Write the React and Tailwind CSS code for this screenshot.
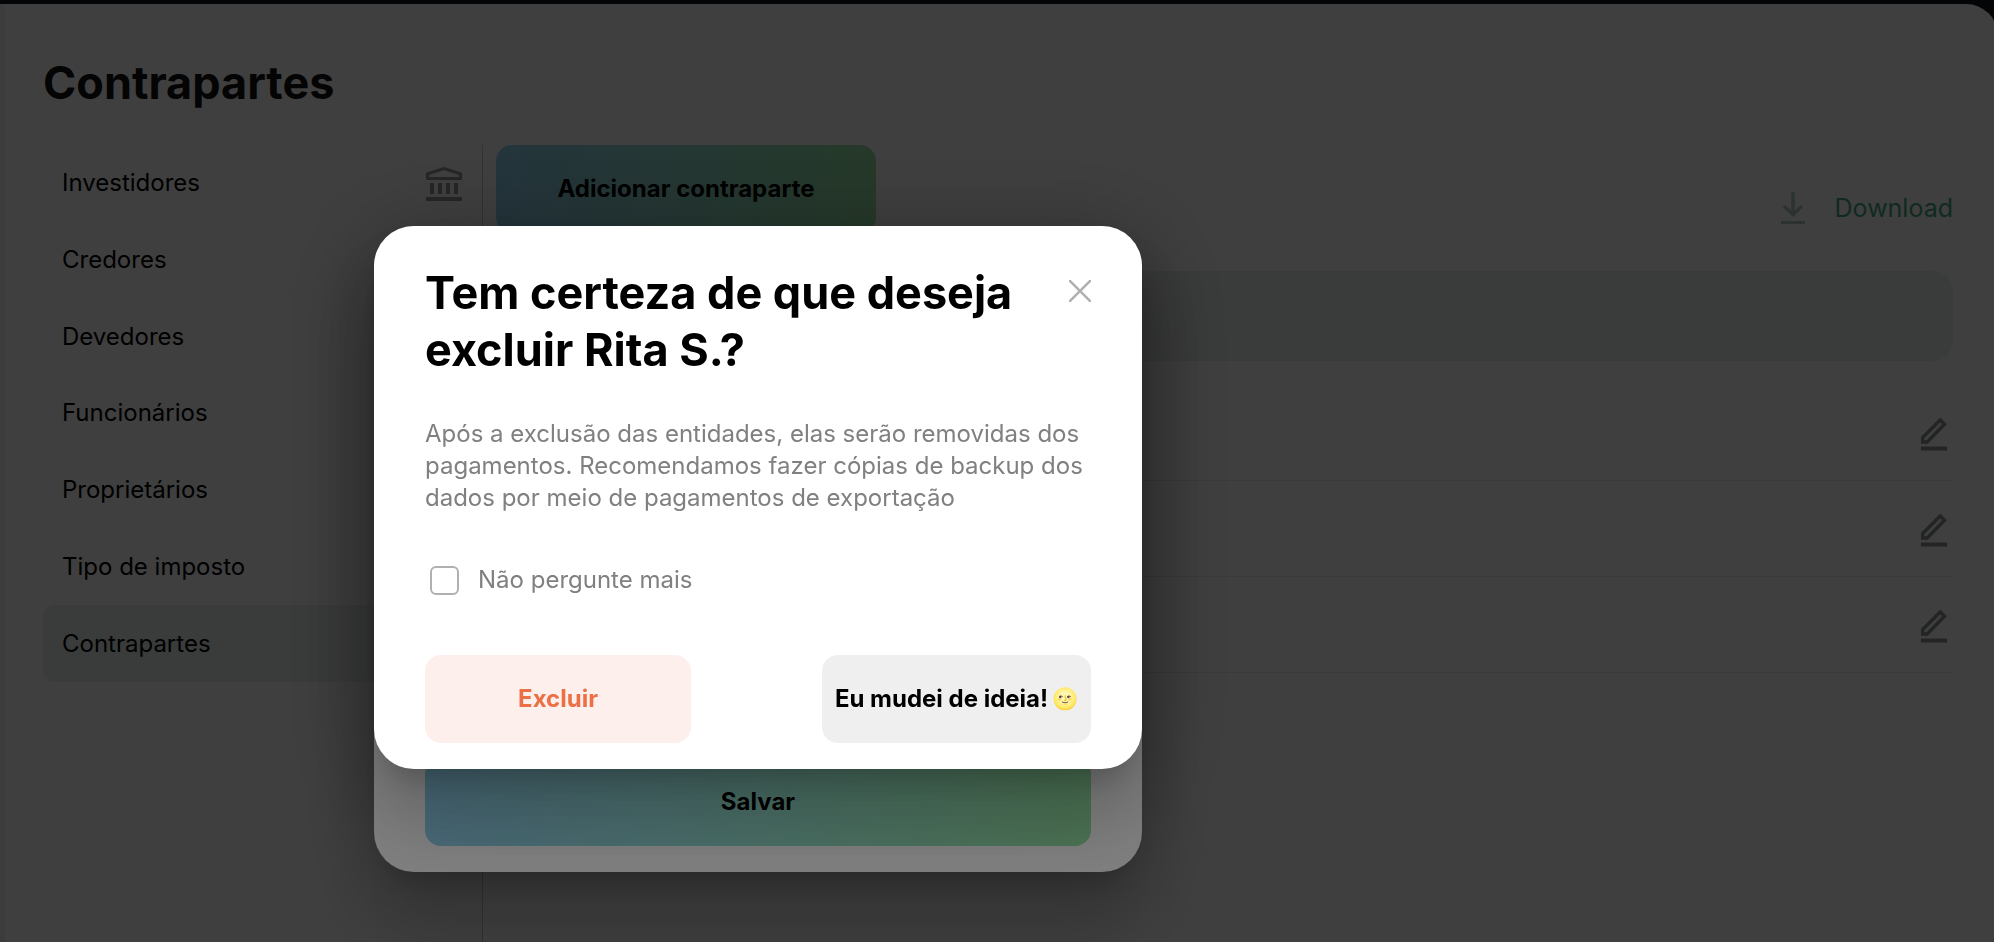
const items = ["Investidores", "Credores", "Devedores", "Funcionários", "Proprietários", "Tipo de imposto", "Contrapartes"];
const rows = ["Contraparte 1", "Contraparte 2", "Contraparte 3"];

function BankIcon() {
  return (
    <svg viewBox="0 0 36 36" className="size-9" fill="none" stroke="#989898" aria-hidden="true">
      <path strokeWidth="3" d="M1.5 13.500V8.800L18 3.500l16.500 5.300v4.700z" />
      <path strokeWidth="4" d="M0 34h36M6 18v11M14 18v11M22 18v11M30 18v11" />
    </svg>
  );
}

function DownloadIcon() {
  return (
    <svg viewBox="0 0 24 32" className="h-8 w-6" fill="none" stroke="#adcfc4" aria-hidden="true">
      <path strokeWidth="3.500" d="M12 0v22M3 14l9 8.500 9-8.500" />
      <path strokeWidth="3" d="M0 30.500h24" />
    </svg>
  );
}

function EditIcon() {
  return (
    <svg viewBox="0 0 26 34" className="h-[34px] w-[26px]" fill="none" stroke="#8c9290" aria-hidden="true">
      <path strokeWidth="3.500" d="M1.700 25V20.500L19.200 3l4.300 4.300L6.200 25z" />
      <path strokeWidth="4" d="M0 31.500h26" />
    </svg>
  );
}

function CloseIcon() {
  return (
    <svg viewBox="0 0 22 22" className="size-[22px]" fill="none" stroke="#b0b0b0" strokeWidth="2.500" aria-hidden="true">
      <path d="M0 0l22 22M22 0L0 22" />
    </svg>
  );
}

const dialogBox =
  "mt-[226px] w-full max-w-[768px] rounded-[40px] bg-white px-[51px] pb-[26px] shadow-[0_22px_30px_-14px_rgba(0,0,0,0.2),0_48px_76px_6px_rgba(0,0,0,0.14),0_18px_92px_16px_rgba(0,0,0,0.12)]";

export default function App() {
  return (
    <div className="min-h-screen overflow-hidden bg-[#0c161e] pt-1 font-['Inter',sans-serif] text-[24px] leading-8 text-black">
      <div className="-mr-1 flex min-h-screen flex-col rounded-tr-[32px] border-l-[5px] border-[#eef0f5] bg-white pr-[45px] pl-[38px]">
        <h1 className="pt-[50px] text-[45px] leading-[57px] font-bold text-[#111111]">Contrapartes</h1>
        <div className="mt-[34px] flex grow">
          <nav className="w-[440px] shrink-0 border-r border-[#c8c8c8]">
            <div className="grid h-[537px] grid-rows-7">
              {items.map((item, i) => (
                <a
                  key={item}
                  href="#"
                  className={
                    i === items.length - 1
                      ? "flex items-center justify-between rounded-xl bg-[#e9efec] pr-5 pl-[19px]"
                      : "flex items-center justify-between pr-5 pl-[19px]"
                  }
                >
                  {item}
                  {i === 0 && <BankIcon />}
                </a>
              ))}
            </div>
          </nav>
          <main className="flex grow flex-col pl-[13px]">
            <div className="flex justify-between">
              <button className="h-[88px] w-[380px] rounded-2xl bg-linear-to-r from-[#92d3f0] to-[#98e6a6] font-bold">
                Adicionar contraparte
              </button>
              <button className="flex h-[126px] items-center gap-[30px] text-[25px] text-[#44a884]">
                <DownloadIcon />
                Download
              </button>
            </div>
            <div className="mb-6 h-[90px] rounded-[20px] bg-[#e9efec]" />
            {rows.map((row) => (
              <div key={row} className="flex h-24 items-center justify-end border-b border-[#e8e8e8] pt-[3px] pr-[6px]">
                <button aria-label="Editar">
                  <EditIcon />
                </button>
              </div>
            ))}
          </main>
        </div>
      </div>

      <div className="fixed inset-0 flex items-start bg-black/50 pl-[374px]">
        <div className={dialogBox}>
          <div className="flex h-[620px] flex-col justify-end">
            <button className="h-[88px] w-full rounded-2xl bg-linear-to-r from-[#92d3f0] to-[#98e6a6] font-bold">
              Salvar
            </button>
          </div>
        </div>
      </div>

      <div className="fixed inset-0 flex items-start bg-black/50 pl-[374px]">
        <div role="dialog" aria-modal="true" aria-labelledby="confirm-title" className={dialogBox}>
          <div className="flex items-start justify-between pt-[38px]">
            <h2 id="confirm-title" className="w-[620px] text-[45px] leading-[57px] font-bold">
              Tem certeza de que deseja excluir Rita S.?
            </h2>
            <button aria-label="Fechar" className="mt-4">
              <CloseIcon />
            </button>
          </div>
          <p className="mt-10 text-[#808080]">
            Após a exclusão das entidades, elas serão removidas dos pagamentos. Recomendamos fazer cópias de backup dos
            dados por meio de pagamentos de exportação
          </p>
          <label className="mt-[50px] flex items-center gap-[19px] pl-[5px] text-[#808080]">
            <input type="checkbox" className="size-[29px] appearance-none rounded-md border-2 border-[#b0b0b0]" />
            Não pergunte mais
          </label>
          <div className="mt-[59px] flex justify-between">
            <button className="h-[88px] w-[266px] rounded-2xl bg-[#fdefec] font-bold text-[#ec6f45]">Excluir</button>
            <button className="flex h-[88px] w-[269px] items-center justify-center gap-1 rounded-2xl bg-[#efefef] font-bold whitespace-nowrap">
              Eu mudei de ideia!
              <span className="text-[21px]">🌝</span>
            </button>
          </div>
        </div>
      </div>
    </div>
  );
}
